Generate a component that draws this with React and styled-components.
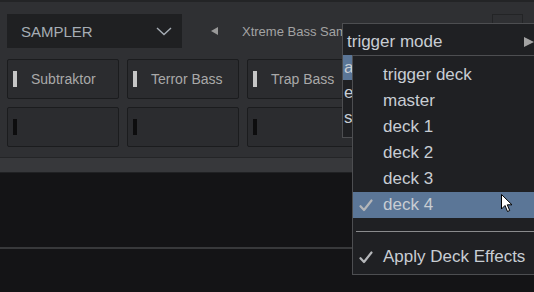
import styled, { createGlobalStyle } from 'styled-components'

const Global = createGlobalStyle`
  html, body { margin: 0; padding: 0; background: #141416; }
  body { font-family: "Liberation Sans", Arial, sans-serif; overflow: hidden; }
`

const Screen = styled.div`
  position: relative;
  width: 534px;
  height: 292px;
  overflow: hidden;
  background: #141416;
`

const TopPanel = styled.div`
  height: 157px;
  background: #2f3033;
  border-top: 2px solid #232426;
  padding: 12px 0 0 7px;
  box-sizing: border-box;
  display: flex;
  flex-direction: column;
  gap: 11px;
`

const HeaderRow = styled.div`
  display: flex;
  align-items: center;
  height: 34px;
`

const Select = styled.div`
  width: 175px;
  height: 34px;
  background: #1f2022;
  display: flex;
  align-items: center;
  justify-content: space-between;
  padding: 0 10px 0 14px;
  box-sizing: border-box;
  color: #a6adb5;
  font-size: 15px;
`

const PrevArrow = styled.div`
  width: 0;
  height: 0;
  margin-left: 29px;
  border-top: 4.5px solid transparent;
  border-bottom: 4.5px solid transparent;
  border-right: 7px solid #999;
`

const SampleName = styled.div`
  margin-left: 24px;
  max-width: 100px;
  overflow: hidden;
  color: #a3a3a3;
  font-size: 13px;
  white-space: nowrap;
`

const SmallBox = styled.div`
  margin-left: auto;
  margin-right: 11px;
  align-self: flex-start;
  width: 31px;
  height: 20px;
  border: 1px solid #232426;
  box-sizing: border-box;
`

const PadGrid = styled.div`
  display: grid;
  grid-template-columns: repeat(4, 112px);
  grid-auto-rows: 40px;
  gap: 8px;
`

const Pad = styled.div`
  background: #2b2c2f;
  border: 1px solid #1b1c1e;
  border-radius: 2px;
  box-sizing: border-box;
  display: flex;
  align-items: center;
  padding-left: 5px;
  color: #a9a9a9;
  font-size: 14px;
`

const Indicator = styled.span`
  width: 4px;
  height: 16px;
  margin-right: 14px;
  background: ${p => (p.$on ? '#c6c6c6' : '#0d0d0e')};
`

const Band = styled.div`
  height: 14px;
  background: #37383b;
  border-top: 1px solid #242527;
  border-bottom: 1px solid #202123;
`

const Lower = styled.div`
  height: 74px;
  border-bottom: 2px solid #38393b;
`

const Menu = styled.div`
  position: absolute;
  box-sizing: border-box;
  background: #1f2023;
  border: 1px solid #4d4e51;
  color: #c8cdd3;
  font-size: 17px;
`

const ParentMenu = styled(Menu)`
  left: 342px;
  top: 23px;
  width: 220px;
  height: 115px;
`

const MenuHeader = styled.div`
  height: 31px;
  box-sizing: border-box;
  padding: 4px 0 0 4px;
  display: flex;
  align-items: center;
  position: relative;
`

const SubArrow = styled.span`
  position: absolute;
  left: 181px;
  top: 13px;
  width: 0;
  height: 0;
  border-top: 5px solid transparent;
  border-bottom: 5px solid transparent;
  border-left: 10px solid #a3a3a3;
`

const ParentItem = styled.div`
  height: 25px;
  display: flex;
  align-items: center;
  padding-left: 1px;
  background: ${p => (p.$active ? '#5b7697' : 'transparent')};
`

const SubMenu = styled(Menu)`
  left: 352px;
  top: 55px;
  width: 200px;
  height: 220px;
  padding-top: 6px;
`

const Item = styled.div`
  height: 26px;
  display: flex;
  align-items: center;
  padding-left: 6px;
  position: relative;
  background: ${p => (p.$active ? '#5b7697' : 'transparent')};
`

const Check = styled.span`
  width: 24px;
  display: flex;
  align-items: center;
`

const Separator = styled.div`
  height: 26px;
  display: flex;
  align-items: center;
  padding-left: 3px;
  &::after {
    content: '';
    flex: 1;
    height: 1px;
    background: #8a8b8d;
  }
`

const Pointer = styled.svg`
  position: absolute;
  left: 148px;
  top: 2px;
`

const CheckIcon = () => (
  <svg width="14" height="13" viewBox="0 0 14 13">
    <path d="M1.5 7.2 L5 11 L12.5 1.5" fill="none" stroke="#b4b6b9" strokeWidth="2.2" strokeLinecap="round" strokeLinejoin="round" />
  </svg>
)

const Chevron = () => (
  <svg width="16" height="9" viewBox="0 0 16 9">
    <path d="M1 1 L8 7.5 L15 1" fill="none" stroke="#a6adb5" strokeWidth="1.4" />
  </svg>
)

const pads = ['Subtraktor', 'Terror Bass', 'Trap Bass', '']
const decks = ['trigger deck', 'master', 'deck 1', 'deck 2', 'deck 3', 'deck 4']

export default function App() {
  return (
    <Screen>
      <Global />
      <TopPanel>
        <HeaderRow>
          <Select>
            SAMPLER
            <Chevron />
          </Select>
          <PrevArrow />
          <SampleName>Xtreme Bass Sampler</SampleName>
          <SmallBox />
        </HeaderRow>
        <PadGrid>
          {pads.map((name, i) => (
            <Pad key={'a' + i}>
              <Indicator $on />
              {name}
            </Pad>
          ))}
          {pads.map((_, i) => (
            <Pad key={'b' + i}>
              <Indicator />
            </Pad>
          ))}
        </PadGrid>
      </TopPanel>
      <Band />
      <Lower />

      <ParentMenu>
        <MenuHeader>
          trigger mode
          <SubArrow />
        </MenuHeader>
        <ParentItem $active>a</ParentItem>
        <ParentItem>e</ParentItem>
        <ParentItem>s</ParentItem>
      </ParentMenu>

      <SubMenu>
        {decks.map(d => (
          <Item key={d} $active={d === 'deck 4'}>
            <Check>{d === 'deck 4' && <CheckIcon />}</Check>
            {d}
            {d === 'deck 4' && (
              <Pointer width="12" height="19" viewBox="0 0 12 19">
                <path d="M0.5 0.5 L0.5 15 L4 11.5 L6.5 17.5 L8.7 16.5 L6.3 10.8 L11 10.8 Z" fill="#fff" stroke="#000" strokeWidth="1" />
              </Pointer>
            )}
          </Item>
        ))}
        <Separator />
        <Item>
          <Check><CheckIcon /></Check>
          Apply Deck Effects
        </Item>
      </SubMenu>
    </Screen>
  )
}
